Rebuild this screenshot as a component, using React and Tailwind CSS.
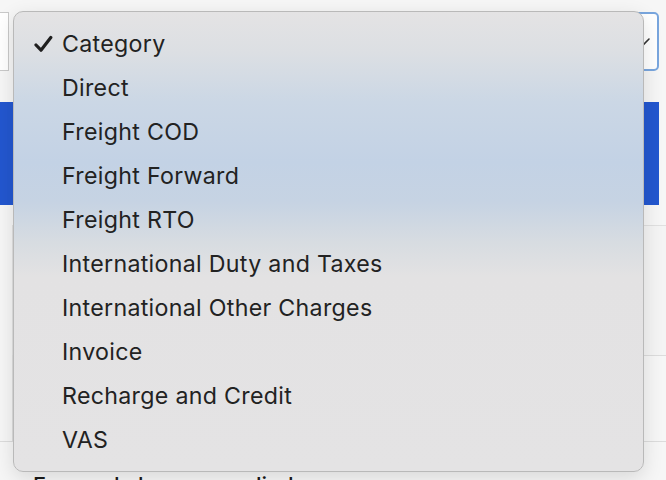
const options = [
  'Category',
  'Direct',
  'Freight COD',
  'Freight Forward',
  'Freight RTO',
  'International Duty and Taxes',
  'International Other Charges',
  'Invoice',
  'Recharge and Credit',
  'VAS',
];

const Check = () => (
  <svg width="19" height="18" viewBox="0 0 19 18" className="absolute left-[20px] top-1/2 -translate-y-1/2">
    <path d="M2 10 L7 15.2 L16.8 2.5" fill="none" stroke="#1f1f1f" strokeWidth="3.2" strokeLinecap="round" strokeLinejoin="round" />
  </svg>
);

const App = () => {
  return (
    <div className="relative w-[666px] h-[480px] overflow-hidden bg-[#f6f6f6] font-['Inter',sans-serif]">
      {/* page behind the menu */}
      <div className="pt-3 pr-[7px]">
        <div className="flex gap-3">
          <div className="w-[9px] h-[59px] bg-white border-y border-r border-[#c9c9c9]" />
          <div className="flex-1 h-[59px] bg-white border-2 border-[#79a6de] rounded-[5px] flex items-center justify-end pr-[6px]">
            <svg width="14" height="10" viewBox="0 0 14 10">
              <path d="M2 2 L7 7 L12 2" fill="none" stroke="#333" strokeWidth="1.6" strokeLinecap="round" />
            </svg>
          </div>
        </div>
        <div className="mt-[31px] h-[103px] bg-[#2357cf]" />
      </div>
      <div className="mt-[20px] border-t border-[#e0e0e0] h-[130px] ml-[12px] border-l bg-[#f4f4f4]" />
      <div className="border-t border-[#dcdcdc] h-[86px] ml-[12px] border-l bg-[#f6f6f6]" />
      <div className="border-t border-[#dcdcdc] pl-[33px] pt-[29px] text-[22px] font-medium leading-[28px] text-[#1a1a1a]">
        Forward charges applied
      </div>

      {/* native select menu */}
      <div className="absolute left-[13px] top-[11px] w-[631px] h-[461px] rounded-[10px] border border-[#b9b9b9] shadow-[0_6px_20px_rgba(0,0,0,0.12)] py-[10px] bg-[linear-gradient(to_bottom,#e4e3e4_0px,#dcdfe3_40px,#cbd7e5_90px,#c3d2e5_150px,#c6d3e3_190px,#d7dce1_230px,#e3e2e3_265px,#e4e3e4_100%)]">
        {options.map((opt, i) => (
          <div key={opt} className="relative h-[44px] flex items-center pl-[48px] text-[23.2px] text-[#222] tracking-[0.3px]">
            {i === 0 && <Check />}
            {opt}
          </div>
        ))}
      </div>
    </div>
  );
};

export default App;
